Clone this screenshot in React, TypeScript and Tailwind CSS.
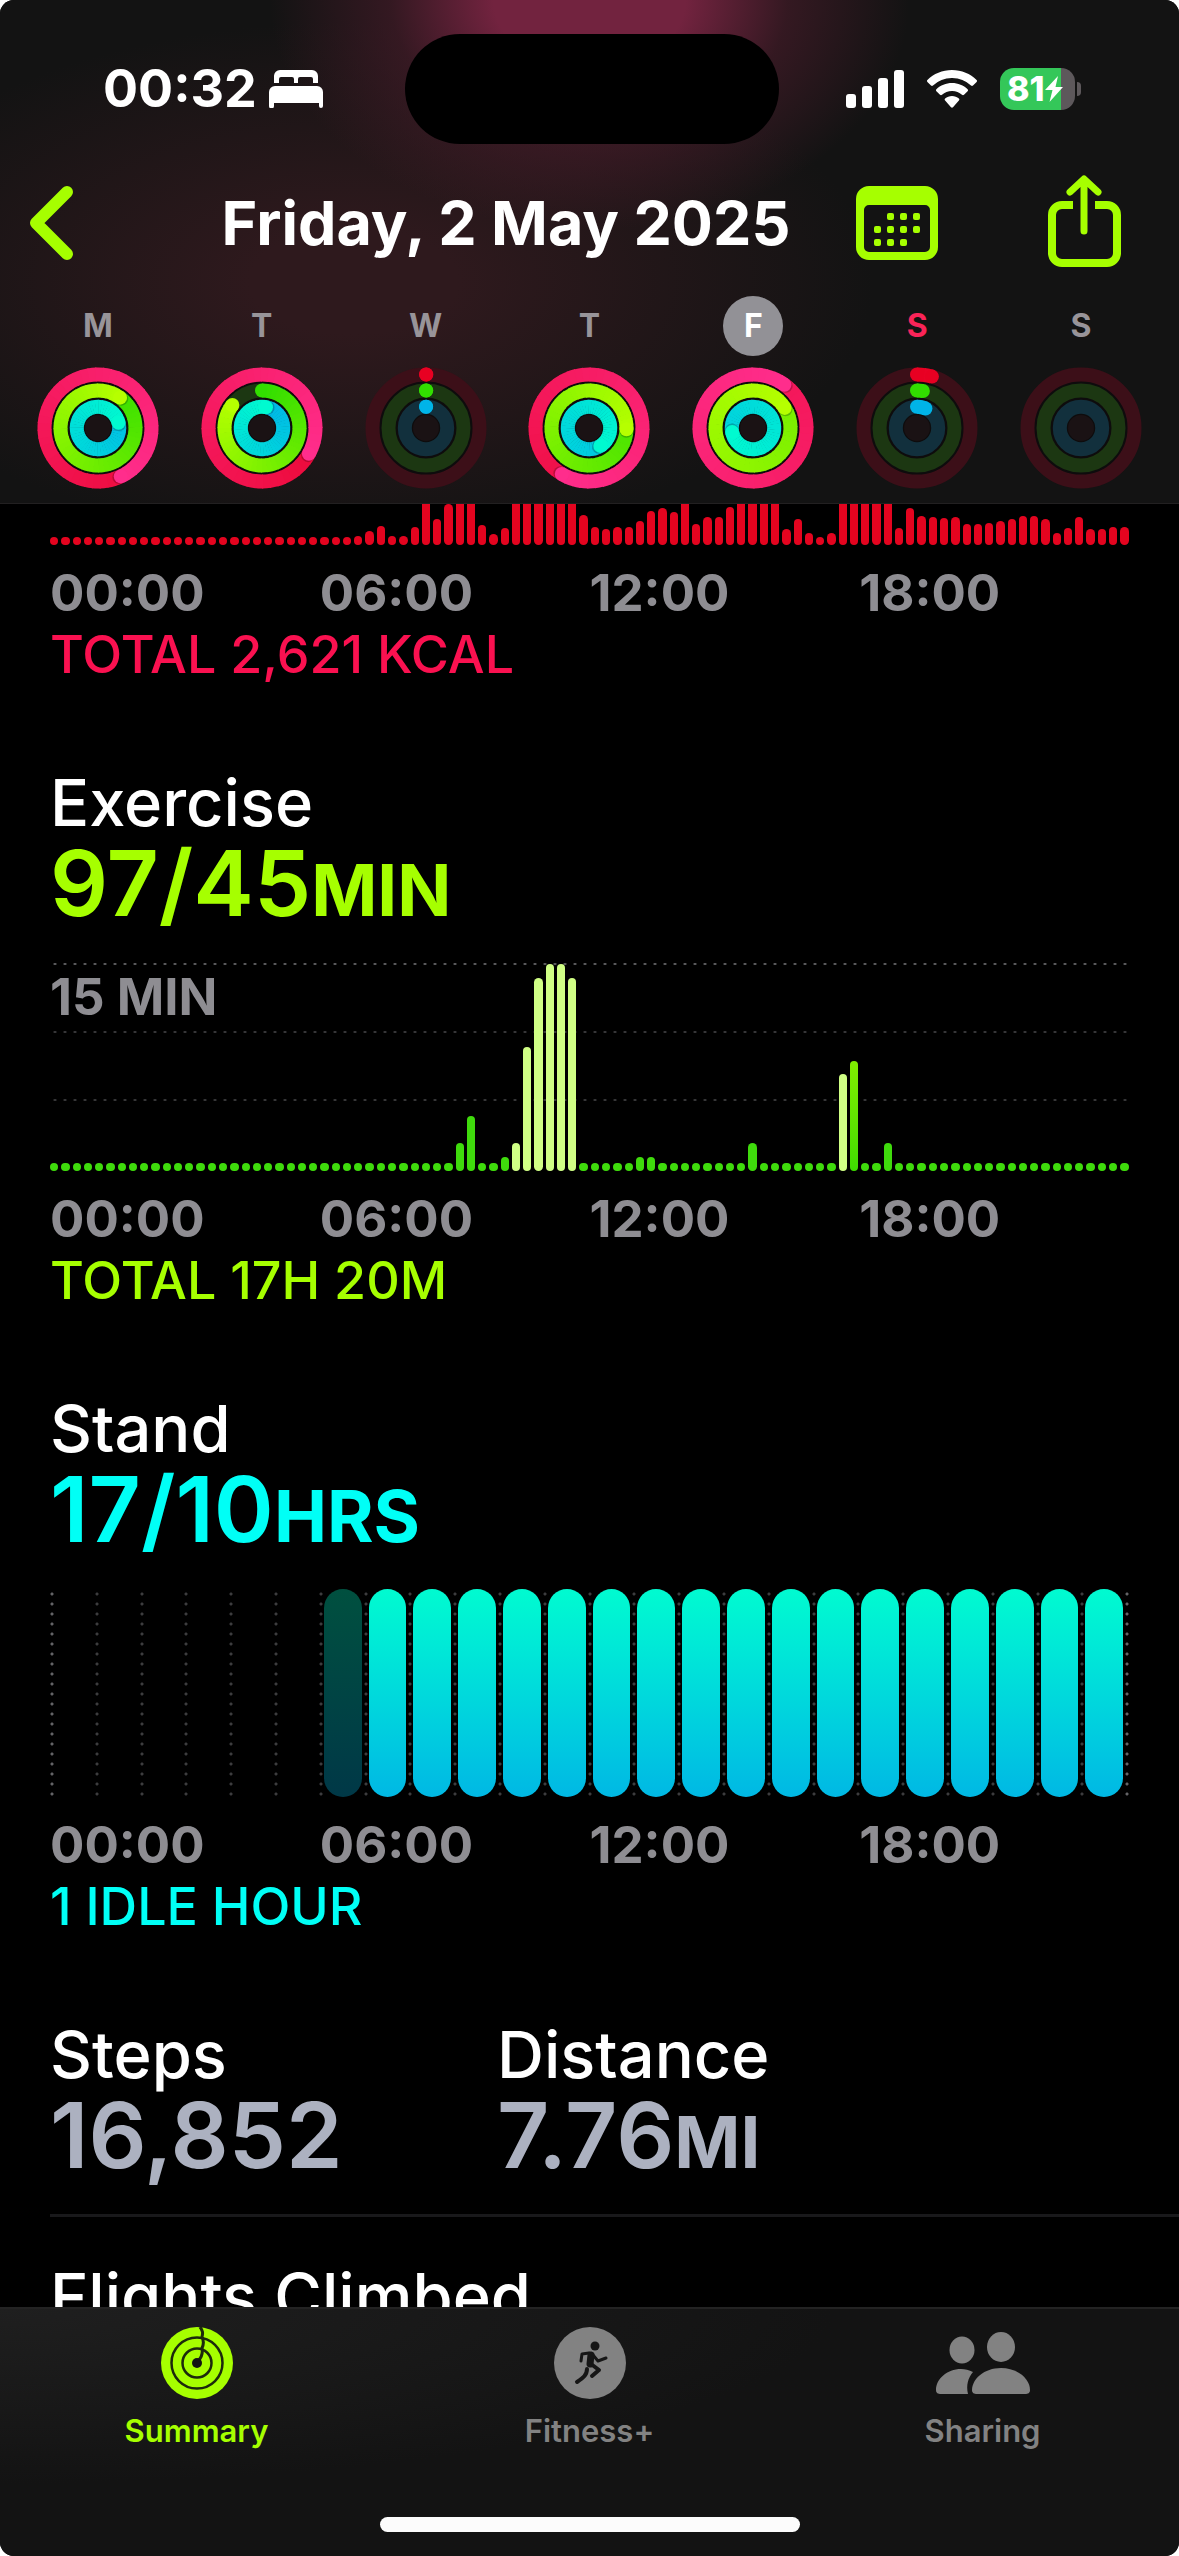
import React from 'react';
import clsx from 'clsx';

interface DayRings {
  letter: string;
  name: string;
  move: number;
  exercise: number;
  stand: number;
  selected?: boolean;
  today?: boolean;
}

// progress: 1 = goal reached, above 1 = second lap
const WEEK: DayRings[] = [
  { letter: 'M', name: 'Monday', move: 1.43, exercise: 1.1, stand: 1.21 },
  { letter: 'T', name: 'Tuesday', move: 1.33, exercise: 0.855, stand: 1.03 },
  { letter: 'W', name: 'Wednesday', move: 0.001, exercise: 0.001, stand: 0.001 },
  { letter: 'T', name: 'Thursday', move: 1.585, exercise: 1.255, stand: 1.41 },
  { letter: 'F', name: 'Friday', move: 2.1, exercise: 2.16, stand: 1.72, selected: true },
  { letter: 'S', name: 'Saturday', move: 0.045, exercise: 0.025, stand: 0.065, today: true },
  { letter: 'S', name: 'Sunday', move: 0, exercise: 0, stand: 0 },
];

const HOURS = ['00:00', '06:00', '12:00', '18:00'];

// one value per quarter hour
const MOVE_BARS: number[] = [
  ...Array(27).fill(8),
  9, 14, 19, 9, 9, 18, 60, 26, 41, 60, 60, 20, 11, 17, 60, 60, 60, 60, 60, 60, 30,
  18, 16, 18, 18, 24, 34, 37, 33, 60, 21, 28, 28, 38, 60, 60, 60, 60, 16, 26, 12, 8,
  12, 60, 60, 60, 60, 60, 17, 37, 29, 28, 27, 28, 21, 21, 22, 24, 26, 29, 29, 26, 12,
  17, 28, 16, 16, 18, 18,
];

const EXERCISE_MINUTES: Record<number, number> = {
  36: 2, 37: 4, 40: 1, 41: 2, 42: 9, 43: 14, 44: 15, 45: 15, 46: 14,
  52: 1, 53: 1, 62: 2, 70: 7, 71: 8, 74: 2,
};
const WORKOUT_SLOTS = [41, 42, 43, 44, 45, 46, 70];

type RGB = [number, number, number];

const mix = (a: RGB, b: RGB, t: number) =>
  `rgb(${a.map((v, i) => Math.round(v + (b[i] - v) * t)).join(',')})`;

const RINGS: { key: 'move' | 'exercise' | 'stand'; r: number; from: RGB; to: RGB; track: string }[] = [
  { key: 'move', r: 53.5, from: [232, 0, 34], to: [255, 45, 140], track: '#3c0f18' },
  { key: 'exercise', r: 37.5, from: [50, 222, 0], to: [182, 255, 0], track: '#1c3712' },
  { key: 'stand', r: 21.2, from: [0, 180, 232], to: [0, 250, 208], track: '#12303d' },
];

const point = (r: number, turn: number) => {
  const a = turn * Math.PI * 2;
  return [61 + r * Math.sin(a), 61 - r * Math.cos(a)];
};

const STEP = 1 / 48;

function Ring({ r, from, to, progress }: { r: number; from: RGB; to: RGB; progress: number }) {
  if (progress <= 0) return null;
  const start = Math.max(0, progress - 1);
  const segments = [];
  for (let t = start; t < progress; t += STEP) {
    const [x1, y1] = point(r, t);
    const [x2, y2] = point(r, Math.min(t + STEP * 1.15, progress));
    segments.push(
      <path
        key={t}
        d={`M${x1} ${y1}A${r} ${r} 0 0 1 ${x2} ${y2}`}
        stroke={mix(from, to, t / Math.max(progress, 0.8))}
        strokeWidth="14"
        fill="none"
      />
    );
  }
  const [sx, sy] = point(r, start);
  const [ex, ey] = point(r, progress);
  const [hx, hy] = point(r, progress + 1.6 / (r * 6.28));
  return (
    <g>
      {progress < 1 && <circle cx={sx} cy={sy} r="7" fill={mix(from, to, 0)} />}
      {segments}
      {progress > 1 && <circle cx={hx} cy={hy} r="7" fill="#000" opacity="0.22" />}
      <circle cx={ex} cy={ey} r="7" fill={mix(from, to, progress < 0.1 ? 0 : 1)} />
    </g>
  );
}

function ActivityRings({ day }: { day: DayRings }) {
  return (
    <svg className="size-[122px]" viewBox="0 0 122 122" aria-hidden="true">
      <circle cx="61" cy="61" r="54" fill="#0e0c0d" />
      <circle cx="61" cy="61" r="13" fill="#1a1214" />
      {RINGS.map((ring) => (
        <g key={ring.key}>
          <circle cx="61" cy="61" r={ring.r} fill="none" stroke={ring.track} strokeWidth="14" />
          <Ring r={ring.r} from={ring.from} to={ring.to} progress={day[ring.key]} />
        </g>
      ))}
    </svg>
  );
}

function StatusBar() {
  return (
    <div className="flex items-center pt-[34px]">
      <div className="flex flex-1 items-center gap-3 pl-[103px]">
        <span className="text-[52px] leading-[56px] font-bold">00:32</span>
        <svg className="h-[38px] w-[54px]" viewBox="0 0 54 38" fill="currentColor" aria-hidden="true">
          <path d="M5 13V6a6 6 0 0 1 6-6h32a6 6 0 0 1 6 6v7h-5V9a2 2 0 0 0-2-2H31a2 2 0 0 0-2 2v4h-4V9a2 2 0 0 0-2-2H12a2 2 0 0 0-2 2v4z" />
          <path d="M0 22a6 6 0 0 1 6-6h42a6 6 0 0 1 6 6v14a2 2 0 0 1-4 0v-3H5v3a2 2 0 0 1-5 0z" />
        </svg>
      </div>
      <div className="h-[110px] w-[374px] rounded-full bg-black" />
      <div className="flex flex-1 items-center justify-end pr-[98px]">
        <svg className="mr-[22px] h-[38px] w-[59px]" viewBox="0 0 59 38" fill="currentColor" aria-hidden="true">
          <rect x="0" y="24" width="10" height="14" rx="3" />
          <rect x="16" y="16" width="10" height="22" rx="3" />
          <rect x="32" y="8" width="10" height="30" rx="3" />
          <rect x="48" y="0" width="10" height="38" rx="3" />
        </svg>
        <svg className="mr-[23px] h-[38px] w-[50px]" viewBox="0 0 50 38" fill="currentColor" aria-hidden="true">
          <path d="M25 0c9.600 0 18.400 3.800 24.600 10 .6.600.6 1.400 0 2l-3.600 3.600c-.6.600-1.400.6-2 0A27 27 0 0 0 25 8 27 27 0 0 0 6 15.600c-.6.600-1.400.6-2 0L.4 12c-.6-.6-.6-1.400 0-2C6.600 3.800 15.400 0 25 0z" />
          <path d="M25 13c6 0 11.500 2.300 15.600 6.200.6.600.6 1.400 0 2L37 24.800c-.6.600-1.400.6-2 0A14.500 14.500 0 0 0 25 21c-3.900 0-7.400 1.400-10 3.800-.6.600-1.400.6-2 0l-3.600-3.600c-.6-.6-.6-1.400 0-2C13.500 15.300 19 13 25 13z" />
          <path d="M25 26c2.700 0 5 .9 6.900 2.500.6.600.6 1.400 0 2L26 37.200c-.6.600-1.400.6-2 0l-5.900-6.700c-.6-.6-.6-1.400 0-2C20 26.900 22.300 26 25 26z" />
        </svg>
        <div className="flex h-[42px] w-[75px] items-center overflow-hidden rounded-[14px] bg-[linear-gradient(90deg,#34c759_81%,#5d585b_81%)] pl-[7px]">
          <span className="text-[34px] leading-[42px] font-extrabold">81</span>
          <svg className="h-[26px] w-[18px] shrink-0" viewBox="0 0 18 26" fill="currentColor" aria-hidden="true">
            <path d="M13 0 0 14h7.500l-3 12L18 11h-7.500z" />
          </svg>
        </div>
        <div className="ml-0.5 h-3.5 w-1 rounded-r-full bg-[#5d585b]" />
      </div>
    </div>
  );
}

function NavBar() {
  return (
    <div className="mt-[31px] flex h-24 items-center pr-[58px] pl-[29px] text-[#a6ff00]">
      <button type="button" aria-label="Back">
        <svg className="h-[74px] w-11" viewBox="0 0 44 74" fill="none" stroke="currentColor" strokeWidth="12" strokeLinecap="round" strokeLinejoin="round">
          <path d="M38 6 7 37l31 31" />
        </svg>
      </button>
      <h1 className="ml-[83px] flex-1 text-center text-[61px] leading-[72px] font-bold whitespace-nowrap text-white">
        Friday, 2 May 2025
      </h1>
      <button type="button" aria-label="Calendar">
        <svg className="h-[74px] w-[82px]" viewBox="0 0 82 74" fill="currentColor">
          <path
            fillRule="evenodd"
            d="M13 0h56a13 13 0 0 1 13 13v48a13 13 0 0 1-13 13H13A13 13 0 0 1 0 61V13A13 13 0 0 1 13 0zm0 19a5 5 0 0 0-5 5v37a5 5 0 0 0 5 5h56a5 5 0 0 0 5-5V24a5 5 0 0 0-5-5z"
          />
          {[[34, 30], [47, 30], [60, 30], [21, 43], [34, 43], [47, 43], [60, 43], [21, 56], [34, 56], [47, 56]].map(([x, y]) => (
            <rect key={`${x}-${y}`} x={x - 3} y={y - 3} width="7" height="7" rx="2" />
          ))}
        </svg>
      </button>
      <button type="button" aria-label="Share" className="ml-[110px] self-start">
        <svg className="h-[92px] w-[73px]" viewBox="0 0 73 92" fill="none" stroke="currentColor" strokeWidth="8">
          <path d="M25 30H14A10 10 0 0 0 4 40v38a10 10 0 0 0 10 10h45a10 10 0 0 0 10-10V40a10 10 0 0 0-10-10H47" />
          <path d="M36 5v51M22 17 36 4l14 13" strokeWidth="7" strokeLinecap="round" strokeLinejoin="round" />
        </svg>
      </button>
    </div>
  );
}

function WeekStrip() {
  return (
    <div className="mt-[25px] grid grid-cols-7 px-4 pb-3.5">
      {WEEK.map((day) => (
        <button key={day.name} type="button" aria-label={day.name} className="flex flex-col items-center gap-[11px]">
          <span
            className={clsx(
              'flex size-[60px] items-center justify-center rounded-full text-[32px] leading-[60px] font-bold',
              day.selected && 'bg-[#929196] text-white',
              day.today && 'text-[#fa2458]',
              !day.selected && !day.today && 'text-[#989499]'
            )}
          >
            {day.letter}
          </span>
          <ActivityRings day={day} />
        </button>
      ))}
    </div>
  );
}

function Axis() {
  return (
    <div className="mt-4 grid grid-cols-4 text-[51px] leading-[64px] font-bold text-[#8e8d92]">
      {HOURS.map((h) => (
        <span key={h}>{h}</span>
      ))}
    </div>
  );
}

interface HeadingProps {
  title: string;
  value: string;
  unit?: string;
  color: string;
}

function Heading({ title, value, unit, color }: HeadingProps) {
  return (
    <div>
      <h2 className="text-[65px] leading-[72px] font-medium">{title}</h2>
      <p className={clsx('text-[91px] leading-[88px] font-semibold', color)}>
        {value}
        {unit && <span className="text-[71px] leading-[72px] font-bold">{unit}</span>}
      </p>
    </div>
  );
}

function Total({ color, children }: { color: string; children: React.ReactNode }) {
  return <p className={clsx('text-[52px] leading-[60px] font-medium', color)}>{children}</p>;
}

function MoveSection() {
  return (
    <section>
      <div className="flex h-[41px] items-end gap-[3px] overflow-hidden">
        {MOVE_BARS.map((h, i) => (
          <div key={i} className="flex-1 shrink-0 rounded-full bg-[#e4041f]" style={{ height: h }} />
        ))}
      </div>
      <Axis />
      <Total color="text-[#fa1150]">TOTAL 2,621 KCAL</Total>
    </section>
  );
}

function DottedLine({ bright }: { bright?: boolean }) {
  return (
    <div
      className={clsx(
        'h-0.5 bg-[length:10px_2px]',
        bright
          ? 'bg-[radial-gradient(circle,#58585a_1px,transparent_2px)]'
          : 'bg-[radial-gradient(circle,#363638_1px,transparent_2px)]'
      )}
    />
  );
}

function ExerciseSection() {
  return (
    <section className="mt-[82px]">
      <Heading title="Exercise" value="97/45" unit="MIN" color="text-[#a6ff00]" />
      <div className="relative mt-9 h-[208px]">
        <DottedLine bright />
        <p className="h-[66px] text-[51px] leading-[64px] font-bold text-[#8e8d92]">15 MIN</p>
        <DottedLine />
        <div className="h-[66px]" />
        <DottedLine />
        <div className="absolute inset-0 flex items-end gap-[3px]">
          {Array.from({ length: 96 }, (_, i) => {
            const minutes = EXERCISE_MINUTES[i] ?? 0;
            return (
              <div
                key={i}
                className={clsx(
                  'flex-1 rounded-full',
                  WORKOUT_SLOTS.includes(i) && 'bg-[#d0ff85]',
                  !WORKOUT_SLOTS.includes(i) && minutes > 5 && 'bg-linear-to-t from-[#3ddc00] to-[#80ee00]',
                  !WORKOUT_SLOTS.includes(i) && minutes <= 5 && 'bg-[#3fdb0c]'
                )}
                style={{ height: Math.max(8, minutes * 13.8) }}
              />
            );
          })}
        </div>
      </div>
      <Axis />
      <Total color="text-[#a6ff00]">TOTAL 17H 20M</Total>
    </section>
  );
}

function StandSection() {
  return (
    <section className="mt-[82px]">
      <Heading title="Stand" value="17/10" unit="HRS" color="text-[#00fff6]" />
      <div className="mt-9 flex h-[208px]">
        {Array.from({ length: 24 }, (_, hour) => (
          <div
            key={hour}
            className={clsx(
              'flex-1 bg-[length:4px_10px] bg-repeat-y pr-0.5 pl-[5px]',
              hour === 0
                ? 'bg-[radial-gradient(circle,#636366_1px,transparent_2px)]'
                : 'bg-[radial-gradient(circle,#3c3c3e_1px,transparent_2px)]'
            )}
          >
            {hour >= 6 && (
              <div
                className={clsx(
                  'h-full rounded-full',
                  hour === 6
                    ? 'bg-linear-to-b from-[#00503f] to-[#003847]'
                    : 'bg-linear-to-b from-[#00fbd0] to-[#00b8e4]'
                )}
              />
            )}
          </div>
        ))}
        <div className="w-1 bg-[radial-gradient(circle,#636366_1px,transparent_2px)] bg-[length:4px_10px]" />
      </div>
      <Axis />
      <Total color="text-[#00fff6]">1 IDLE HOUR</Total>
    </section>
  );
}

function SummaryIcon() {
  return (
    <svg className="size-[72px]" viewBox="0 0 72 72" aria-hidden="true">
      <circle cx="36" cy="36" r="36" fill="currentColor" />
      <g fill="none" stroke="#1c2a0c" strokeWidth="2.5">
        <circle cx="36" cy="36" r="25.500" />
        <circle cx="36" cy="36" r="14.500" />
        <path d="M39 0c3 4 3 6 2 10 2 4 2 7 0 11 1 5 0 9-4 13" strokeWidth="3" />
      </g>
      <circle cx="36" cy="36" r="5" fill="#131313" />
    </svg>
  );
}

function FitnessIcon() {
  return (
    <svg className="size-[72px]" viewBox="0 0 72 72" aria-hidden="true">
      <circle cx="36" cy="36" r="36" fill="currentColor" />
      <circle cx="41" cy="19" r="4.500" fill="#161616" />
      <g fill="none" stroke="#161616" strokeWidth="3" strokeLinecap="round" strokeLinejoin="round">
        <path d="m35 26-7 1-1 7" />
        <path d="m39 28 5 6 8-3" />
        <path d="m37 37 8 6-7 6" strokeWidth="4" />
        <path d="M33 42c0 6-4 9-10 13" strokeWidth="4" />
        <path d="m37 28-1 9" strokeWidth="7" />
      </g>
    </svg>
  );
}

function SharingIcon() {
  return (
    <svg className="h-[63px] w-[94px]" viewBox="0 0 94 63" fill="currentColor" aria-hidden="true">
      <ellipse cx="26" cy="18" rx="12.500" ry="13.500" />
      <ellipse cx="65" cy="15" rx="14" ry="15" />
      <path d="M37 40c-5 6-7 13-5 22H5c-3 0-5-1-5-4 0-11 11-21 25-21 4 0 8 1 12 3z" />
      <path d="M65 36c17 0 29 11 29 22 0 3-2 4-5 4H41c-3 0-5-1-5-4 0-11 12-22 29-22z" />
    </svg>
  );
}

const TABS = [
  { label: 'Summary', icon: SummaryIcon, active: true },
  { label: 'Fitness+', icon: FitnessIcon, active: false },
  { label: 'Sharing', icon: SharingIcon, active: false },
];

function TabBar() {
  return (
    <footer className="flex shrink-0 flex-col border-t-2 border-[#232323] bg-[radial-gradient(ellipse_at_top_left,#1f1f1f,#131313_50%)] pb-6">
      <nav className="grid grid-cols-3 pt-[18px]">
        {TABS.map(({ label, icon: Icon, active }) => (
          <button
            key={label}
            type="button"
            className={clsx('flex flex-col items-center gap-3', active ? 'text-[#a6ff00]' : 'text-[#828282]')}
          >
            <span className="flex h-[72px] items-center">
              <Icon />
            </span>
            <span className="text-[31px] leading-[40px] font-semibold">{label}</span>
          </button>
        ))}
      </nav>
      <div className="mx-auto mt-[66px] h-[15px] w-[420px] rounded-full bg-[#fcfcfc]" />
    </footer>
  );
}

export default function App() {
  return (
    <div className="flex h-screen flex-col overflow-hidden rounded-[14px] bg-black font-['Inter','Liberation_Sans',sans-serif] text-white">
      <header className="shrink-0 border-b border-[#222021] bg-[#131313] bg-[radial-gradient(ellipse_320px_230px_at_50%_0%,#72233f_30%,#4a1c2b99_62%,transparent),radial-gradient(ellipse_520px_260px_at_30%_56%,#2e191d_20%,transparent)]">
        <StatusBar />
        <NavBar />
        <WeekStrip />
      </header>

      <main className="min-h-0 flex-1 overflow-hidden pl-[50px]">
        <div className="pr-[50px]">
          <MoveSection />
          <ExerciseSection />
          <StandSection />
          <section className="mt-[82px] grid grid-cols-[447px_1fr]">
            <Heading title="Steps" value="16,852" color="text-[#acb1c0]" />
            <Heading title="Distance" value="7.76" unit="MI" color="text-[#acb1c0]" />
          </section>
        </div>
        <hr className="mt-[35px] border-t-[3px] border-[#19191b]" />
        <h2 className="mt-11 text-[65px] leading-[72px] font-medium">Flights Climbed</h2>
      </main>

      <TabBar />
    </div>
  );
}
